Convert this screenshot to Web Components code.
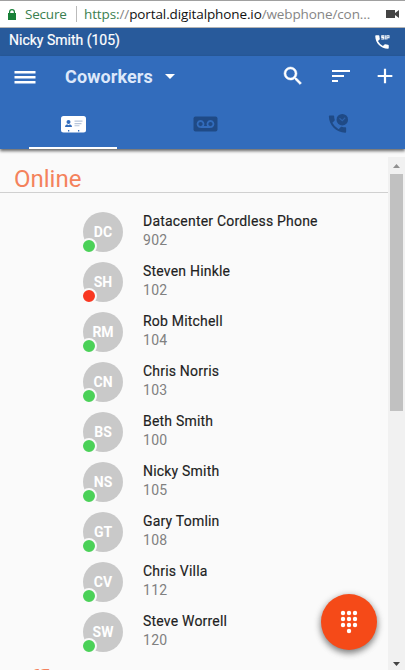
<!DOCTYPE html>
<html lang="en">
<head>
<meta charset="utf-8">
<title>Web Phone</title>
<style>
  html, body {
    margin: 0;
    height: 100%;
    overflow: hidden;
  }
</style>
</head>
<body>

<web-phone></web-phone>

<template id="address-bar">
  <style>
    :host {
      display: flex;
      align-items: center;
      box-sizing: border-box;
      height: 28px;
      flex: none;
      padding: 0 6px 0 8px;
      border-top: 1px solid #a0a0a0;
      border-bottom: 1px solid #b4b4b4;
      background: #fff;
      font: 13.5px/26px "Open Sans", sans-serif;
      letter-spacing: -0.2px;
      white-space: nowrap;
    }
    .lock { width: 8px; height: 11px; margin-right: 9px; }
    .secure { width: 42px; color: #3b8050; }
    .rule { width: 1px; height: 16px; margin: 0 7px 0 9px; background: #bbb; }
    .url { flex: 1; color: #858585; letter-spacing: -0.11px; }
    .scheme { color: #3b8050; }
    .host { color: #111; }
    .cam { width: 13px; height: 10px; }
  </style>
  <svg class="lock" viewBox="0 0 8 11"><path fill="#188038" d="M0 4h1V3a3 3 0 0 1 6 0v1h1v7H0zM2.200 4h3.600V3a1.800 1.800 0 0 0-3.600 0z"/></svg>
  <span class="secure">Secure</span>
  <span class="rule"></span>
  <span class="url"><span class="scheme">https:</span>//<span class="host">portal.digitalphone.io</span>/webphone/con...</span>
  <svg class="cam" viewBox="0 0 13 10"><path fill="#444" d="M0 1h9v3l4-3v8L9 6v3H0z"/></svg>
</template>

<template id="user-bar">
  <style>
    :host {
      display: flex;
      justify-content: space-between;
      align-items: center;
      box-sizing: border-box;
      height: 28px;
      flex: none;
      padding: 0 14px 4px 9px;
      background: #285a9b;
      color: #fff;
      font: 14px/24px Roboto, sans-serif;
      -webkit-text-stroke: 0.2px;
    }
    svg { width: 18px; height: 18px; margin-top: 4px; }
  </style>
  <slot></slot>
  <svg viewBox="0 0 24 24" fill="#fff"><path d="M20 15.5c-1.25 0-2.45-.2-3.57-.57-.35-.11-.74-.03-1.02.24l-2.2 2.2a15.05 15.05 0 0 1-6.59-6.58l2.2-2.21c.28-.27.36-.66.25-1.01A11.4 11.4 0 0 1 8.5 4c0-.55-.45-1-1-1H4c-.55 0-1 .45-1 1 0 9.39 7.61 17 17 17 .55 0 1-.45 1-1v-3.500c0-.55-.45-1-1-1zM11 3h4v1.300h-2.700v.5H15v3.700h-4V7.200h2.700v-.6H11zM15.700 3h1.400v5.500h-1.400zM17.800 3H22v4h-2.800v1.500h-1.400zM19.200 4.200v1.600h1.500V4.200z"/></svg>
</template>

<template id="tool-bar">
  <style>
    :host {
      display: flex;
      align-items: center;
      height: 41px;
      padding-left: 14px;
      padding-right: 8px;
      color: #fff;
      font: 700 18px/41px Roboto, sans-serif;
    }
    svg { display: block; fill: #fff; }
    .menu { width: 22px; height: 14px; margin: 1px 29px 0 0; }
    .title { color: #dde8fa; letter-spacing: 0.1px; }
    .caret { width: 10px; height: 5px; margin-left: 12px; }
    .search { width: 24px; height: 24px; margin-left: auto; }
    .sort { width: 24px; height: 24px; margin-left: 24px; }
    .add { width: 22px; height: 22px; margin-left: 21px; margin-right: 1px; }
    .search, .sort, .add { margin-bottom: 2px; }
  </style>
  <svg class="menu" viewBox="0 0 22 14"><path d="M.5 1h21v2.600H.5zM.5 6h21v2.600H.5zM.5 11h21v2.600H.5z"/></svg>
  <span class="title"><slot></slot></span>
  <svg class="caret" viewBox="0 0 10 5"><path d="M0 0h10L5 5z"/></svg>
  <svg class="search" viewBox="0 0 24 24"><path stroke="#fff" stroke-width=".5" d="M15.500 14h-.79l-.28-.27A6.470 6.470 0 0 0 16 9.500 6.500 6.500 0 1 0 9.500 16c1.610 0 3.090-.59 4.230-1.570l.27.28v.79l5 4.990L20.490 19l-4.990-5zm-6 0C7.010 14 5 11.990 5 9.500S7.010 5 9.500 5 14 7.010 14 9.500 11.990 14 9.500 14z"/></svg>
  <svg class="sort" viewBox="0 0 24 24"><path d="M3 18h6v-2H3v2zM3 6v2h18V6H3zm0 7h12v-2H3v2z"/></svg>
  <svg class="add" viewBox="0 0 24 24"><path d="M20 13.200h-6.800V20h-2.400v-6.800H4v-2.400h6.800V4h2.400v6.800H20z"/></svg>
</template>

<template id="tab-strip">
  <style>
    :host {
      display: grid;
      grid-template-columns: 88px 88px 88px;
      justify-content: space-between;
      height: 52px;
      padding: 0 24px 0 29px;
    }
    .tab {
      display: flex;
      justify-content: center;
      align-items: center;
      box-sizing: border-box;
      padding-top: 4px;
      border-bottom: 2px solid transparent;
    }
    .active { border-color: #fff; }
    svg { display: block; fill: #1f4a86; }
  </style>
  <div class="tab active">
    <svg width="25" height="17" viewBox="0 0 25 17">
      <rect width="25" height="16.500" rx="2.500" fill="#fff"/>
      <circle cx="7.500" cy="6" r="2" fill="#326cbc"/>
      <path fill="#326cbc" d="M4 11c0-2 1.500-2.500 2.500-2.500l1 .7 1-.7c1 0 2.500.5 2.500 2.500zM7 14h1.300v1.500H7zM17 14h1.300v1.500H17z"/>
      <path fill="#b7c5da" d="M13.500 4.500h8v1.200h-8zM13.500 7h7v1.200h-7zM13.500 9.200h5v1h-5z"/>
    </svg>
  </div>
  <div class="tab">
    <svg width="25" height="16" viewBox="0 0 25 16">
      <rect width="24" height="15" x=".5" y=".5" rx="2"/>
      <path fill="none" stroke="#326cbc" stroke-width="1.800" d="M7.500 11a3 3 0 1 1 .1 0h9.800a3 3 0 1 1 .1 0"/>
    </svg>
  </div>
  <div class="tab">
    <svg width="23" height="24" viewBox="0 0 24 24">
      <path d="M20 15.500c-1.250 0-2.450-.2-3.570-.57-.35-.11-.74-.03-1.020.24l-2.200 2.200a15.050 15.050 0 0 1-6.590-6.580l2.200-2.210c.28-.27.36-.66.25-1.010A11.400 11.400 0 0 1 8.500 4c0-.55-.45-1-1-1H4c-.55 0-1 .45-1 1 0 9.390 7.610 17 17 17 .55 0 1-.45 1-1v-3.500c0-.55-.45-1-1-1z"/>
      <circle cx="17" cy="7.500" r="6"/>
      <path fill="none" stroke="#2d62ab" stroke-width="1.200" d="M14 6l3 2.500L20 5.500"/>
    </svg>
  </div>
</template>

<template id="section-title">
  <style>
    :host {
      display: block;
      box-sizing: border-box;
      height: 29px;
      padding-left: 14px;
      border-bottom: 1px solid #d0d0d0;
      color: #f4825c;
      font: 24px/30px Roboto, sans-serif;
    }
  </style>
  <slot></slot>
</template>

<template id="contact-row">
  <style>
    :host {
      display: flex;
      align-items: center;
      height: 50px;
      padding-left: 83px;
      font: 14px/19px Roboto, sans-serif;
      --status: #4bd158;
    }
    :host([busy]) { --status: #f93822; }
    .avatar {
      position: relative;
      width: 40px;
      height: 40px;
      margin-right: 20px;
      border-radius: 50%;
      background: #c9c9c9;
      color: #fff;
      font-weight: 700;
      line-height: 40px;
      text-align: center;
    }
    .avatar::after {
      content: "";
      position: absolute;
      left: -2px;
      bottom: -2px;
      width: 12px;
      height: 12px;
      border: 2px solid #fafafa;
      border-radius: 50%;
      background: var(--status);
    }
    .name { color: #212121; letter-spacing: 0.2px; -webkit-text-stroke: 0.15px; }
    .ext { color: #808080; letter-spacing: 0.3px; }
    .text { padding-bottom: 2px; }
  </style>
  <div class="avatar"></div>
  <div class="text">
    <div class="name"><slot></slot></div>
    <div class="ext"></div>
  </div>
</template>

<template id="scroll-track">
  <style>
    :host {
      display: flex;
      flex-direction: column;
      align-items: center;
      width: 17px;
      flex: none;
      box-sizing: border-box;
      margin-top: 8px;
      background: #f1f1f1;
    }
    svg { display: block; width: 7px; height: 4px; margin: 7px 0 6px; }
    .thumb { width: 13px; height: 237px; background: #c1c1c1; }
    .bottom { margin: auto 0 4px; }
  </style>
  <svg viewBox="0 0 7 4"><path fill="#909090" d="M0 4l3.500-4L7 4z"/></svg>
  <div class="thumb"></div>
  <svg class="bottom" viewBox="0 0 7 4"><path fill="#444" d="M0 0h7L3.500 4z"/></svg>
</template>

<template id="dial-button">
  <style>
    :host {
      display: flex;
      justify-content: center;
      align-items: center;
      width: 56px;
      height: 56px;
      border-radius: 50%;
      background: #f54a18;
      box-shadow: 0 3px 6px rgba(0, 0, 0, .4), 0 2px 8px rgba(0, 0, 0, .2);
    }
    svg { width: 18px; height: 24px; }
  </style>
  <svg viewBox="0 0 18 24" fill="#fff">
    <circle cx="3" cy="3" r="2.200"/><circle cx="9" cy="3" r="2.200"/><circle cx="15" cy="3" r="2.200"/>
    <circle cx="3" cy="9" r="2.200"/><circle cx="9" cy="9" r="2.200"/><circle cx="15" cy="9" r="2.200"/>
    <circle cx="3" cy="15" r="2.200"/><circle cx="9" cy="15" r="2.200"/><circle cx="15" cy="15" r="2.200"/>
    <circle cx="9" cy="21" r="2.200"/>
  </svg>
</template>

<template id="web-phone">
  <style>
    :host {
      display: flex;
      flex-direction: column;
      position: relative;
      height: 100vh;
      overflow: hidden;
      background: #fafafa;
    }
    header {
      position: relative;
      flex: none;
      background: #326cbc;
      box-shadow: 0 2px 3px rgba(0, 0, 0, .6);
    }
    .body { display: flex; flex: 1; min-height: 0; }
    .list { flex: 1; overflow: hidden; padding-top: 15px; }
    .rows { padding: 14px 0 7px; }
    dial-button { position: absolute; right: 28px; bottom: 20px; }
  </style>
  <address-bar></address-bar>
  <user-bar>Nicky Smith (105)</user-bar>
  <header>
    <tool-bar>Coworkers</tool-bar>
    <tab-strip></tab-strip>
  </header>
  <div class="body">
    <div class="list">
      <section-title>Online</section-title>
      <div class="rows">
        <contact-row initials="DC" ext="902">Datacenter Cordless Phone</contact-row>
        <contact-row initials="SH" ext="102" busy>Steven Hinkle</contact-row>
        <contact-row initials="RM" ext="104">Rob Mitchell</contact-row>
        <contact-row initials="CN" ext="103">Chris Norris</contact-row>
        <contact-row initials="BS" ext="100">Beth Smith</contact-row>
        <contact-row initials="NS" ext="105">Nicky Smith</contact-row>
        <contact-row initials="GT" ext="108">Gary Tomlin</contact-row>
        <contact-row initials="CV" ext="112">Chris Villa</contact-row>
        <contact-row initials="SW" ext="120">Steve Worrell</contact-row>
      </div>
      <section-title>Offline</section-title>
    </div>
    <scroll-track></scroll-track>
  </div>
  <dial-button></dial-button>
</template>

<script>
// Every element takes its markup from the template with its own name
class TemplateElement extends HTMLElement {
  constructor() {
    super();
    const template = document.getElementById(this.localName);
    this.attachShadow({ mode: 'open' }).appendChild(template.content.cloneNode(true));
  }
}

class ContactRow extends TemplateElement {
  connectedCallback() {
    this.shadowRoot.querySelector('.avatar').textContent = this.getAttribute('initials');
    this.shadowRoot.querySelector('.ext').textContent = this.getAttribute('ext');
  }
}

customElements.define('address-bar', class extends TemplateElement {});
customElements.define('user-bar', class extends TemplateElement {});
customElements.define('tool-bar', class extends TemplateElement {});
customElements.define('tab-strip', class extends TemplateElement {});
customElements.define('section-title', class extends TemplateElement {});
customElements.define('contact-row', ContactRow);
customElements.define('scroll-track', class extends TemplateElement {});
customElements.define('dial-button', class extends TemplateElement {});
customElements.define('web-phone', class extends TemplateElement {});
</script>
</body>
</html>
